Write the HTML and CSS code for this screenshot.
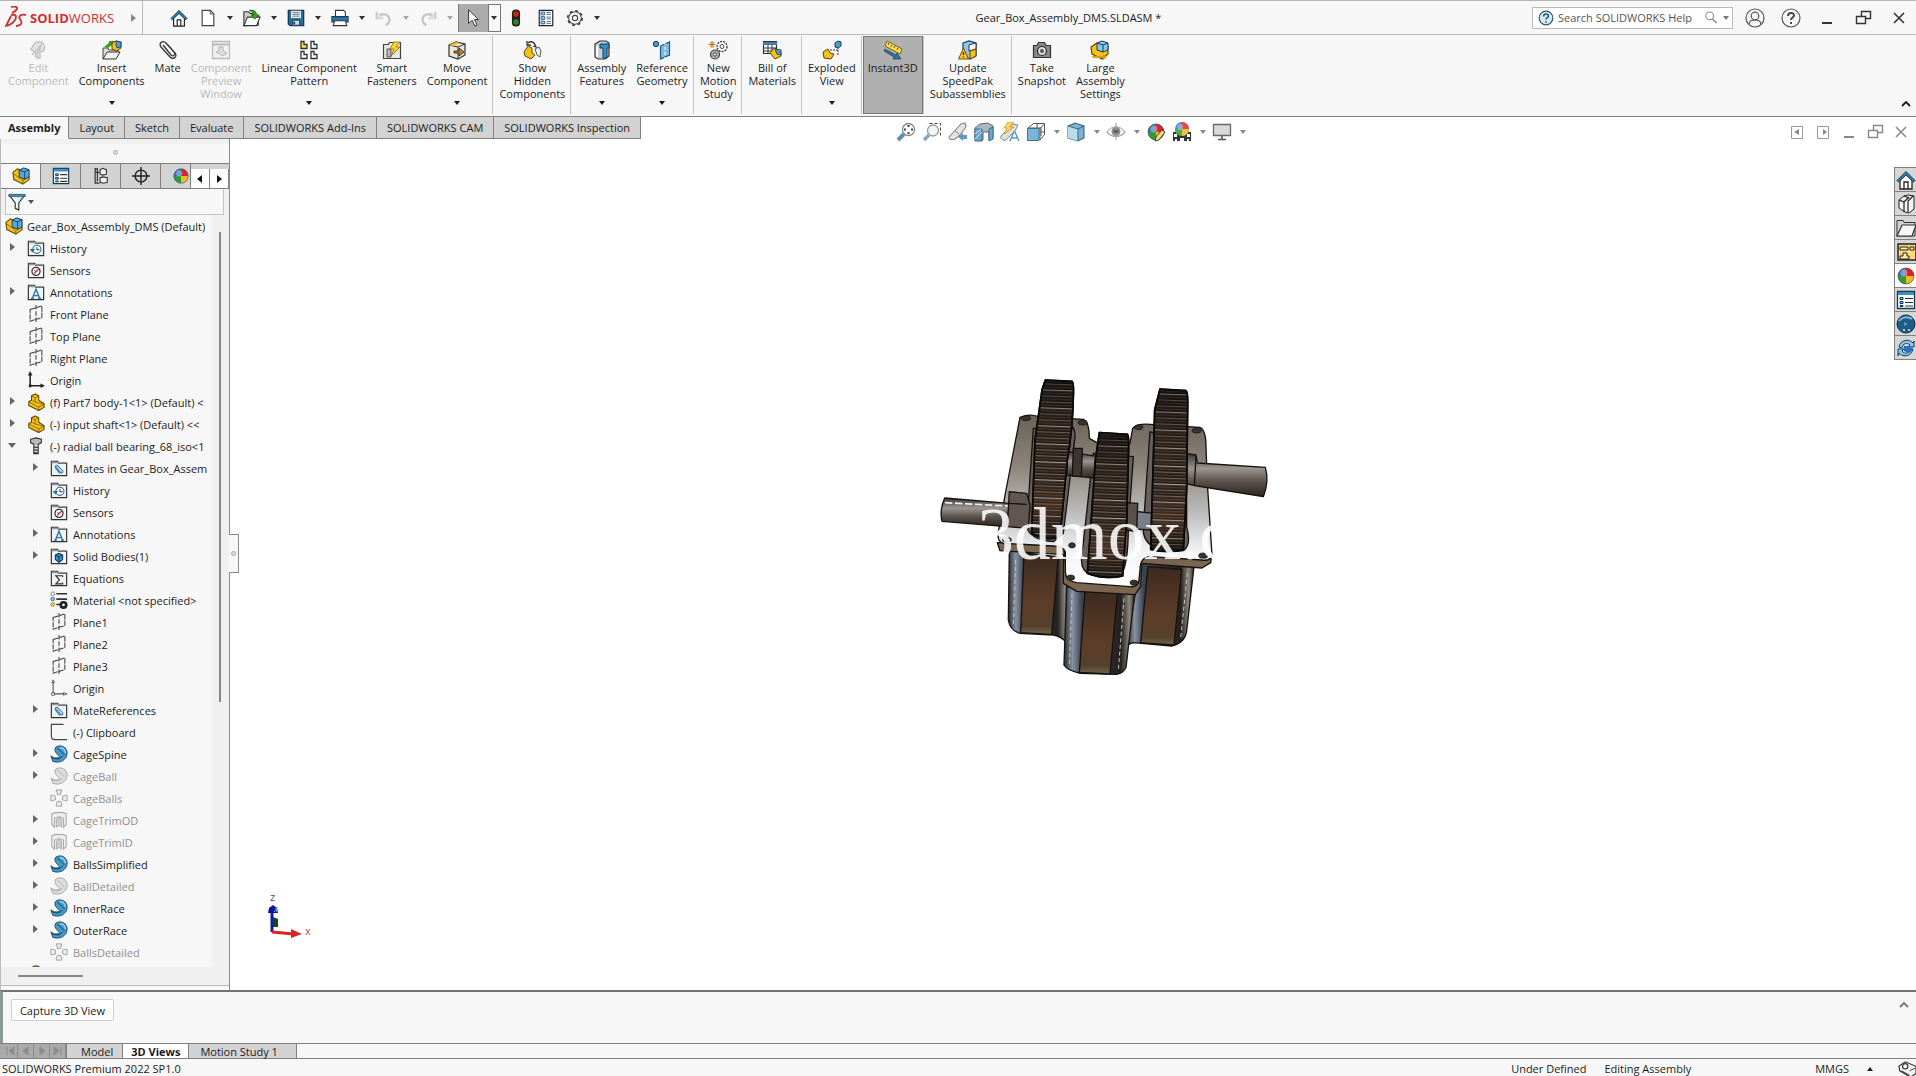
FILE: index.html
```html
<!DOCTYPE html>
<html lang="en">
<head>
<meta charset="utf-8">
<title>Gear_Box_Assembly_DMS.SLDASM</title>
<link rel="stylesheet" href="styles.css">
</head>
<body>
<svg class="defs" aria-hidden="true">
  <symbol id="caret" viewBox="0 0 8 8"><path d="M1 2h6L4 6z" fill="currentColor"/></symbol>
  <symbol id="right" viewBox="0 0 8 8"><path d="M2 0l5 4-5 4z" fill="currentColor"/></symbol>
  <symbol id="home" viewBox="0 0 20 20"><path d="M4 10v9h12v-9L10 4z" fill="#fff" stroke="#222" stroke-width="1.3"/><path d="M8 19v-7h4v7" fill="none" stroke="#222" stroke-width="1.3"/><path d="M1 10.500L10 1.500l9 9-1.500 1.500L10 5 2.500 12z" fill="#3c7da6" stroke="#123a55"/></symbol>
  <symbol id="new" viewBox="0 0 20 20"><path d="M3.500 1.500h9l4 4v13h-13z" fill="#fff" stroke="#444" stroke-width="1.300"/><path d="M12.500 1.500v4h4" fill="none" stroke="#444"/></symbol>
  <symbol id="open" viewBox="0 0 20 20"><path d="M1 18.500V3h5l2 2h3v3h6v10z" fill="#cfcfca" stroke="#333" stroke-width="1.200"/><path d="M1 18.500L5 9h14l-4 9.500z" fill="#fff" stroke="#333" stroke-width="1.200"/><path d="M7 1.500c5-1 8 1 8 5h3l-5 5-4-5h3c0-2-2-3-5-5z" fill="#3c9a1c" stroke="#1b5c0c" stroke-width=".7"/></symbol>
  <symbol id="save" viewBox="0 0 20 20"><path d="M1.500 1.500h17v17h-15l-2-2z" fill="#2f6d96" stroke="#153c58" stroke-width="1.500"/><path d="M4.500 2h11v8h-11z" fill="#eef4f8"/><path d="M6 4h8M6 6h8M6 8h8" stroke="#56758a"/><path d="M6 12.500h8V18H6z" fill="#cfdce4" stroke="#153c58"/><path d="M8 14v3" stroke="#153c58" stroke-width="2"/></symbol>
  <symbol id="print" viewBox="0 0 20 20"><path d="M5 9V1.500h9l2 2V9" fill="#fff" stroke="#333" stroke-width="1.200"/><path d="M1 8.500h18v6H1z" fill="#2f76a6" stroke="#153c58" stroke-width="1.200"/><path d="M4 13h12l1.500 5.500h-15z" fill="#fff" stroke="#333" stroke-width="1.200"/></symbol>
  <symbol id="undo" viewBox="0 0 20 20"><path d="M2 3v7h7M3 9c4-5 13-4 13 3 0 3-2 5-4 6" fill="none" stroke="#c6c6c6" stroke-width="2.500"/><path d="M2 3l8 8H2z" fill="#ddd"/></symbol>
  <symbol id="redo" viewBox="0 0 20 20"><path d="M18 3v7h-7M17 9C13 4 4 5 4 12c0 3 2 5 4 6" fill="none" stroke="#c6c6c6" stroke-width="2.500"/><path d="M18 3l-8 8h8z" fill="#ddd"/></symbol>
  <symbol id="cursor" viewBox="0 0 20 20"><path d="M4 1v15l4-3.500L11 19l2.500-1.200-3-6H15z" fill="#fff" stroke="#222"/></symbol>
  <symbol id="traffic" viewBox="0 0 20 20"><rect x="5.500" y=".5" width="9" height="19" rx="4" fill="#2b2118"/><circle cx="10" cy="5.500" r="3" fill="#c42a1c"/><circle cx="10" cy="14.500" r="3" fill="#288a2c"/></symbol>
  <symbol id="options" viewBox="0 0 20 20"><path d="M2.500 1.500h15v17h-15z" fill="#fff" stroke="#223" stroke-width="1.300"/><path d="M4.500 3.500h4v3h-4zm0 5h4v3h-4zm0 5h4v3h-4z" fill="#a9cce2" stroke="#1e5a86"/><path d="M10.500 4h5M10.500 6h5M10.500 9h5M10.500 11h5M10.500 14h5M10.500 16h5" stroke="#567"/></symbol>
  <symbol id="gear" viewBox="0 0 20 20"><circle cx="10" cy="10" r="8" fill="none" stroke="#444" stroke-width="2" stroke-dasharray="3.100 3.180"/><circle cx="10" cy="10" r="7" fill="#fff" stroke="#444" stroke-width="1.200"/><circle cx="10" cy="10" r="3" fill="none" stroke="#444" stroke-width="1.300"/></symbol>
  <symbol id="part" viewBox="0 0 20 20"><path d="M5 3l4-2 4 2v5l6 4v4l-6 3.500L2 14V9.500l3-1.500z" fill="#f5c21c" stroke="#5e4703" stroke-width="1.200" stroke-linejoin="round"/><path d="M5 3l4 2.500L13 3M9 5.500V10l-3-1.500M9 10l4 1 6 2M2 10l11 5.500v4M13 15.500l6-3" fill="none" stroke="#7d5f08" stroke-width=".9"/></symbol>
  <symbol id="assy" viewBox="0 0 20 20"><path d="M1 6l5-4 4 2v6l9 1v3l-7 5L2 14z" fill="#f5c21c" stroke="#5e4703" stroke-width="1.200" stroke-linejoin="round"/><path d="M1 7l11 8v4M12 15l7-4" fill="none" stroke="#7d5f08"/><path d="M8 3.500L13 1l6 2v8l-5 2.500-6-2.500z" fill="#59a9d8" stroke="#173f5c" stroke-width="1.100" stroke-linejoin="round"/><path d="M8 3.500l6 2 5-2.500M14 5.500V13" fill="none" stroke="#173f5c"/></symbol>
  <symbol id="partgray" viewBox="0 0 20 20"><path d="M6 4c2-3 9-3 10 1 2 3 0 7-4 7v6H9l-1-5-5-4z" fill="#e2e2e2" stroke="#bdbdbd" stroke-width="1.300"/><path d="M4 15L14 4M7 17l6-10" stroke="#c4c4c4" stroke-width="1.500"/></symbol>
  <symbol id="insert" viewBox="0 0 20 20"><path d="M1 19V8h5l1 2h9v2" fill="#ddd" stroke="#444"/><path d="M1 19l4-7h13l-4 7z" fill="#f3f3ee" stroke="#333"/><path d="M2 7l5-4V1h5v5h-2V5L6 8z" fill="#3c9a1c"/><path d="M10 3l4-2 5 1v6l-4 3-5-2z" fill="#f5c21c" stroke="#5e4703"/><path d="M14 1l5 1v5l-4 1-1-3z" fill="#4f9ccb" stroke="#173f5c" stroke-width=".8"/></symbol>
  <symbol id="clip" viewBox="0 0 20 20"><path d="M5 5l8 10c2 2 5 0 3-3L8 3C5 0 0 3 3 7l9 10c3 3 8 0 5-4L10 5" fill="none" stroke="#333" stroke-width="1.300"/></symbol>
  <symbol id="preview" viewBox="0 0 20 20"><path d="M1.500 1.500h17v17h-17z" fill="#f0f0f0" stroke="#bbb" stroke-width="1.300"/><path d="M2 4.500h16" stroke="#bbb" stroke-width="2"/><path d="M5 12l3-1V7h4v4l4 2-4 3z" fill="#ddd" stroke="#b5b5b5"/></symbol>
  <symbol id="pattern" viewBox="0 0 20 20"><g fill="#fff" stroke="#333" stroke-width="1.300"><path d="M2 1.500h3v3h3v4H2z" fill="#f8dd62"/><path d="M12 1.500h3v3h3v4h-6zM2 11.500h3v3h3v4H2zM12 11.500h3v3h3v4h-6z"/></g></symbol>
  <symbol id="smart" viewBox="0 0 20 20"><path d="M1.500 4.500h5l1-2h11v16h-17z" fill="#e8e8e2" stroke="#444" stroke-width="1.200"/><path d="M5 9h4v8H5z" fill="#bbb" stroke="#555"/><path d="M12 2h6l-4 5h4l-9 9 3-7H8z" fill="#ffd22e" stroke="#946a04" stroke-width=".8"/></symbol>
  <symbol id="move" viewBox="0 0 20 20"><path d="M2 5l7-3 9 2v11l-7 4-9-3z" fill="#ece7d6" stroke="#333" stroke-width="1.200"/><path d="M2 5l9 2 7-3M11 7v12" fill="none" stroke="#333"/><path d="M2 5l7-3 4 1-7 3z" fill="#f5c21c"/><path d="M7 11h5V8l5 4-5 4v-3H7z" fill="#c87b20" stroke="#222" stroke-width=".8"/></symbol>
  <symbol id="show" viewBox="0 0 20 20"><path d="M2 12l4-6 4 2v5l3 2-4 4-6-3z" fill="#f5c21c" stroke="#5e4703"/><path d="M13 9l4-2 2 4-1 6-3-2z" fill="#eee" stroke="#555"/><path d="M6 3c4-3 7 0 8 4l-3-1M5 1v4h4" fill="none" stroke="#333" stroke-width="1.300"/></symbol>
  <symbol id="feat" viewBox="0 0 20 20"><path d="M3 4l5-3h6l3 2v13l-4 3H6l-3-2z" fill="#c4d0d6" stroke="#333" stroke-width="1.200"/><path d="M8 4h9v4h-2v10h-4V8H8z" fill="#3b8fc6" stroke="#173f5c"/><path d="M5 6v11" stroke="#fff" stroke-width="2"/></symbol>
  <symbol id="refgeo" viewBox="0 0 20 20"><circle cx="4" cy="4" r="2.700" fill="#4b9aca" stroke="#173f5c"/><path d="M8.500 6l9-4v13l-9 4z" fill="#7dbde2" stroke="#1e5a86" stroke-width="1.200"/><path d="M13 2v17" stroke="#fff" stroke-dasharray="3 2"/></symbol>
  <symbol id="motion" viewBox="0 0 20 20"><circle cx="14" cy="6.500" r="5" fill="#fff" stroke="#444" stroke-width="1.400" stroke-dasharray="2 1"/><circle cx="14" cy="6.500" r="2" fill="none" stroke="#444"/><circle cx="7" cy="14.500" r="4.500" fill="#aaa" stroke="#444" stroke-width="1.200"/><circle cx="7" cy="14.500" r="1.600" fill="#fff" stroke="#444"/><path d="M4 1v7M.5 4.500h7M2 2l4 5M6 2L2 7" stroke="#c97320"/></symbol>
  <symbol id="bom" viewBox="0 0 20 20"><path d="M1.500 1.500h13v12h-13z" fill="#fff" stroke="#333" stroke-width="1.200"/><path d="M1 2h14v3H1z" fill="#3b7faa"/><path d="M2 8h12M2 11h12M6 5v8M10 5v8" stroke="#333"/><path d="M8 13l4-5 7 3v5l-6 3z" fill="#f5c21c" stroke="#5e4703"/><path d="M13 9l6 1v5l-4-1z" fill="#4f9ccb" stroke="#173f5c" stroke-width=".8"/></symbol>
  <symbol id="explode" viewBox="0 0 20 20"><path d="M1 12l5-3 2 4 4 1-3 5-7-1z" fill="#f5c21c" stroke="#5e4703"/><path d="M13 3l3-2 3 1v4l-3 2-3-1z" fill="#4f9ccb" stroke="#173f5c"/><path d="M8 10h8V8M16 10v5" fill="none" stroke="#333" stroke-dasharray="2 1"/></symbol>
  <symbol id="instant" viewBox="0 0 20 20"><path d="M4 1l15 8-2 5L2 6z" fill="#ffe04a" stroke="#7b6507"/><path d="M6 3L5 5M9 5L8 7M12 6l-1 2M15 8l-1 2" stroke="#444"/><path d="M2 9l11 6 1-2 4 6h-8l1-2L1 11z" fill="#3c6f96" stroke="#1d415c" stroke-width=".7"/></symbol>
  <symbol id="update" viewBox="0 0 20 20"><path d="M5 3l6-2 7 2v13l-6 3-7-3z" fill="#8cc7e8" stroke="#173f5c" stroke-width="1.200"/><path d="M11 5l7-2v6l-7 2z" fill="#fff" stroke="#333"/><path d="M12 11l6-2v7l-6 3z" fill="#f5c21c" stroke="#5e4703"/><path d="M5.500 8l5 11H.5z" fill="#ffc52c" stroke="#7b4f00"/><path d="M5.500 12v3M5.500 16.500v1" stroke="#222" stroke-width="1.300"/></symbol>
  <symbol id="camera" viewBox="0 0 20 20"><path d="M1.500 5.500H5l1.500-3h6l1.500 3h4.500v12h-17z" fill="#8a8a86" stroke="#333" stroke-width="1.200"/><circle cx="10" cy="11" r="4.500" fill="#ddd" stroke="#222" stroke-width="1.200"/><circle cx="10" cy="11" r="2" fill="#555"/></symbol>
  <symbol id="large" viewBox="0 0 20 20"><path d="M1 7l6-4 11 3v8l-6 5L2 14z" fill="#f5c21c" stroke="#5e4703" stroke-width="1.200"/><path d="M7 3l5-2 6 2v7l-5 2-6-2z" fill="#8cc7e8" stroke="#173f5c"/><path d="M7 3l6 2 5-2M13 5v7" fill="none" stroke="#173f5c"/><path d="M2 16h11v-2l4 3-4 3v-2H3z" fill="#e09a18"/></symbol>
  <symbol id="zoomfit" viewBox="0 0 20 20"><path d="M2 18l6-6" stroke="#5b93b6" stroke-width="4"/><circle cx="12.500" cy="7.500" r="6" fill="#fff" stroke="#888" stroke-width="1.300"/><path d="M12.500 3v2M12.500 10v2M8 7.500h2M15 7.500h2" stroke="#444" stroke-width="2"/></symbol>
  <symbol id="zoomarea" viewBox="0 0 20 20"><path d="M7.500 1.500h11v12" fill="none" stroke="#444" stroke-dasharray="3 2"/><path d="M2 18l5-5" stroke="#7fa9c4" stroke-width="3.500"/><circle cx="11" cy="8.500" r="5.500" fill="#f2f4f5" stroke="#999" stroke-width="1.300"/></symbol>
  <symbol id="prev" viewBox="0 0 20 20"><path d="M1 15L13 2l4-1 1 4-6 8-5 4c-3 1-6 1-6-2z" fill="#e4e4e2" stroke="#888" stroke-width="1.100"/><path d="M7 9l4 3" stroke="#888"/><path d="M10 15l5-4v2h4v4h-4v2z" fill="#5b9cc4"/></symbol>
  <symbol id="section" viewBox="0 0 20 20"><path d="M1 6l5-4 8-1 5 3v12l-4 2v-8H9v8H1z" fill="#a9b9c2" stroke="#666"/><path d="M1 7h7v12H1zM15 7l4-2v12l-4 2z" fill="#66a9cd" stroke="#3d6a86"/><path d="M1 12l6-5M1 17l7-7" stroke="#d4eaf6"/></symbol>
  <symbol id="dynamic" viewBox="0 0 20 20"><path d="M1 14L13 2l5 1-3 6-9 9c-3 1-6-1-5-4z" fill="#e0dfdb" stroke="#888"/><path d="M8 0h6l-4 5h4L4 12l3-6H4z" fill="#ffd65c" stroke="#b78a25" stroke-width=".7"/><path d="M10 19l4-9h1l4 9M12 16h5" fill="none" stroke="#5b9cc4" stroke-width="1.500"/></symbol>
  <symbol id="orient" viewBox="0 0 20 20"><path d="M7 1.500h11.500v11L14 18V6.500L18.500 2M7 2L2 6" fill="#fff" stroke="#555"/><path d="M11 2v4M15 5v9M2 6h12M15 10h4" stroke="#555"/><path d="M1.500 6.500H13v12H1.500z" fill="#79b5d6" stroke="#3a7090"/></symbol>
  <symbol id="cube" viewBox="0 0 20 20"><path d="M2 4l7-3 9 3v12l-6 3-10-3z" fill="#7ab4d3" stroke="#41647a" stroke-width="1.100"/><path d="M2 4l10 3v12L2 16z" fill="#b9dcee"/><path d="M2 4l10 3 6-3M12 7v12" fill="none" stroke="#41647a"/></symbol>
  <symbol id="eye" viewBox="0 0 20 20"><path d="M1 10c5-7 13-7 18 0-5 6-13 6-18 0z" fill="#fff" stroke="#aaa" stroke-width="1.200"/><circle cx="10" cy="9.500" r="4.500" fill="#8a8a8a"/><circle cx="10" cy="9.500" r="1.800" fill="#333"/><path d="M10 1v17" stroke="#999"/></symbol>
  <symbol id="ball" viewBox="0 0 20 20"><path d="M10 10V2a8 8 0 0 1 8 8z" fill="#d8232a"/><path d="M10 10h8a8 8 0 0 1-8 8z" fill="#efbd1f"/><path d="M10 10v8a8 8 0 0 1-8-8z" fill="#319b35"/><path d="M10 10H2a8 8 0 0 1 8-8z" fill="#2d73be"/><circle cx="8" cy="7" r="3.500" fill="#fff" opacity=".35"/><circle cx="10" cy="10" r="8" fill="none" stroke="#444" stroke-width=".7"/></symbol>
  <symbol id="ballpen" viewBox="0 0 20 20"><use href="#ball"/><path d="M9 19l1-4 6-7 3 2-6 8z" fill="#f2dc7a" stroke="#444"/></symbol>
  <symbol id="scene" viewBox="0 0 20 20"><path d="M1 10h18v9H1z" fill="#333"/><path d="M2 12h3v3H2zM8 16h4v3H8zM15 12h3v3h-3zM3 17h2v2H3zM15 17h2v2h-2z" fill="#fff"/><circle cx="10" cy="7" r="7" fill="#4a86c8"/><path d="M10 7V0a7 7 0 0 1 7 7z" fill="#dc4a4a"/><path d="M10 7h7a7 7 0 0 1-7 7z" fill="#efc440"/><path d="M10 7v7a7 7 0 0 1-7-7z" fill="#4fae52"/><circle cx="8" cy="5" r="3" fill="#fff" opacity=".35"/></symbol>
  <symbol id="monitor" viewBox="0 0 20 20"><path d="M1.500 2.500h17v11h-17z" fill="#d9dadb" stroke="#666" stroke-width="1.300"/><path d="M10 14v3M6 17.500h8" stroke="#555" stroke-width="1.600"/></symbol>
  <symbol id="helpblue" viewBox="0 0 20 20"><circle cx="10" cy="10" r="8.500" fill="#d7ebf5" stroke="#3b5160" stroke-width="1.500"/><path d="M7 8c0-4 6-4 6-.5 0 2-3 2.200-3 4.500M10 14v2" fill="none" stroke="#1c5c86" stroke-width="2"/></symbol>
  <symbol id="help" viewBox="0 0 20 20"><circle cx="10" cy="10" r="9" fill="none" stroke="#555" stroke-width="1.200"/><path d="M7 8c0-4 6-4 6-.5 0 2-3 2.200-3 4.500M10 14v2" fill="none" stroke="#444" stroke-width="1.900"/></symbol>
  <symbol id="user" viewBox="0 0 20 20"><circle cx="10" cy="10" r="9" fill="none" stroke="#555" stroke-width="1.200"/><circle cx="10" cy="8" r="3.800" fill="none" stroke="#555" stroke-width="1.200"/><path d="M4 16c1-4 3-4 6-4s5 0 6 4" fill="none" stroke="#555" stroke-width="1.200"/></symbol>
  <symbol id="mag" viewBox="0 0 20 20"><circle cx="8" cy="7" r="5.500" fill="none" stroke="#888" stroke-width="1.500"/><path d="M12 11l6 6" stroke="#888" stroke-width="2"/></symbol>
  <symbol id="min" viewBox="0 0 20 20"><path d="M5 15h10" stroke="currentColor" stroke-width="2"/></symbol>
  <symbol id="restore" viewBox="0 0 20 20"><path d="M3.500 8.500h9v7h-9zM8.500 8V3.500h9v7H13" fill="none" stroke="currentColor" stroke-width="1.400"/></symbol>
  <symbol id="close" viewBox="0 0 20 20"><path d="M5 5l10 10M15 5L5 15" stroke="currentColor" stroke-width="1.600"/></symbol>
  <symbol id="paneL" viewBox="0 0 20 20"><path d="M4.500 4.500h11v12h-11z" fill="none" stroke="#999"/><path d="M12 7v6l-5-3z" fill="#888"/></symbol>
  <symbol id="paneR" viewBox="0 0 20 20"><path d="M4.500 4.500h11v12h-11z" fill="none" stroke="#999"/><path d="M10 7v6l4-3z" fill="#888"/></symbol>
  <symbol id="chev" viewBox="0 0 12 12"><path d="M2 8l4-4 4 4" fill="none" stroke="currentColor" stroke-width="1.800"/></symbol>
  <symbol id="books" viewBox="0 0 20 20"><path d="M3 6l5-4 4-1 6 1v13l-5 4-4-1-6-4z" fill="#f4f4f4" stroke="#222"/><path d="M3 6l5 2v10M8 8l5-5M12 18V7l5-5M8 2l5 2" fill="none" stroke="#222" stroke-width="1.200"/></symbol>
  <symbol id="folder" viewBox="0 0 20 20"><path d="M1 18V2.500h6l1 2h11V18z" fill="#d2d2d2" stroke="#333"/><path d="M1 18L6 7h14l-4 11z" fill="#f5f5f5" stroke="#333" stroke-width="1.200"/></symbol>
  <symbol id="palette" viewBox="0 0 20 20"><path d="M2 2h18v16H2z" fill="#ffd67a" stroke="#222" stroke-width="1.500"/><path d="M4 5h8v3H4zM14 5h4v3h-4zM7 11h4v3h2v3H4v-3h3z" fill="#ffeaa5" stroke="#222"/></symbol>
  <symbol id="props" viewBox="0 0 20 20"><path d="M1.500 1.500h17v17h-17z" fill="#fff" stroke="#123a55" stroke-width="1.300"/><path d="M2 2h16v3H2z" fill="#3b8fc6"/><path d="M4 7.500h3v2H4zm0 4h3v2H4zm0 4h3v1H4z" fill="#8cc7e8" stroke="#123a55"/><path d="M9 8.500h8M9 12.500h8M9 16h8" stroke="#333" stroke-width="1.200"/></symbol>
  <symbol id="forum" viewBox="0 0 20 20"><circle cx="10" cy="10" r="9" fill="#1f5c86" stroke="#0b2f4a"/><path d="M3 7c3-4 9-5 13-2" fill="none" stroke="#7eb8da" stroke-width="2"/><path d="M8 8l4 2-4 2z" fill="#5f9cc0"/><path d="M7 16h2M12 16h2" stroke="#cfe7f4" stroke-width="1.300"/></symbol>
  <symbol id="sync" viewBox="0 0 20 20"><path d="M3 9c1-7 10-9 14-4l1-2v6h-6l2-2c-3-3-7-2-8 3zM17 11c-1 7-10 9-14 4l-1 3v-7h6l-2 2c3 4 7 2 8-2z" fill="#8cc7e8" stroke="#173f5c"/><path d="M8 8h6l3 4-4 3-5-2z" fill="#2c6fbe"/></symbol>
  <symbol id="config" viewBox="0 0 20 20"><path d="M3.500 1v17h5M3.500 6h5M3 2h3v14" fill="none" stroke="#333" stroke-width="1.300"/><path d="M9 3l3-1.500L16 3v5l-4 1-3-1zM9 12l3-1 5 1v5l-4 1-4-1z" fill="#eee" stroke="#333" stroke-width="1.200"/></symbol>
  <symbol id="target" viewBox="0 0 20 20"><circle cx="10" cy="10" r="6.500" fill="none" stroke="#222" stroke-width="1.600"/><path d="M10 0v20M0 10h20" stroke="#222" stroke-width="1.600"/></symbol>
  <symbol id="filter" viewBox="0 0 20 20"><path d="M1.500 2.500h17L12 11v8l-4-2v-6z" fill="#eef5f9" stroke="#333" stroke-width="1.300"/><path d="M1 1.500h18v2.500H1z" fill="#3b8fc6" stroke="#173f5c" stroke-width=".7"/></symbol>
  <symbol id="fold" viewBox="0 0 20 20"><path d="M1.500 18.500v-16h7l1 2h9v14z" fill="#f0f2f3" stroke="#333" stroke-width="1.300"/><path d="M2 4h16" stroke="#999" stroke-width="1.500"/></symbol>
  <symbol id="history" viewBox="0 0 20 20"><use href="#fold"/><circle cx="11" cy="11.500" r="4.500" fill="#fff" stroke="#2a7099" stroke-width="1.200"/><path d="M11 9v3h3" fill="none" stroke="#222"/><path d="M3 11l3 4 3-4z" fill="#2a7099"/></symbol>
  <symbol id="sensor" viewBox="0 0 20 20"><use href="#fold"/><circle cx="10" cy="11.500" r="4.500" fill="#fff" stroke="#333" stroke-width="1.400"/><path d="M8 14l5-5" stroke="#c33" stroke-width="1.500"/><path d="M8 10l2 2" stroke="#333"/></symbol>
  <symbol id="annot" viewBox="0 0 20 20"><use href="#fold"/><path d="M6 17l4-10 4 10M7.500 14h5M4.500 17h3M12.500 17h3" fill="none" stroke="#2b78ae" stroke-width="1.600"/></symbol>
  <symbol id="mates" viewBox="0 0 20 20"><use href="#fold"/><path d="M7 9l5 6c1 1 3 0 2-2L9 8c-2-2-4 0-3 2l5 6" fill="none" stroke="#2b78ae" stroke-width="1.200"/></symbol>
  <symbol id="solid" viewBox="0 0 20 20"><use href="#fold"/><path d="M6 9l4-2 4 2v5l-4 3-4-3z" fill="#3b8fc6" stroke="#123a55" stroke-width="1.200"/><path d="M6 9l4 2 4-2M10 11v6" fill="none" stroke="#123a55"/></symbol>
  <symbol id="equation" viewBox="0 0 20 20"><use href="#fold"/><path d="M14 9V7.500H6.500l4 4.500-4 4.500H14V15" fill="none" stroke="#333" stroke-width="1.300"/></symbol>
  <symbol id="plane" viewBox="0 0 20 20"><path d="M3.500 5l13-4v13l-13 4z" fill="none" stroke="#444" stroke-width="1.200" stroke-dasharray="6 1"/><path d="M10 0v20" stroke="#444" stroke-dasharray="5 2" stroke-width="1.200"/></symbol>
  <symbol id="origin" viewBox="0 0 20 20"><path d="M3.500 3v13.500H17" fill="none" stroke="#222" stroke-width="1.700"/><path d="M1 5l2.500-5L6 5zM15 14l5 2.500-5 2.500zM2 15h3v3H2z" fill="#222"/></symbol>
  <symbol id="originh" viewBox="0 0 20 20"><path d="M3.500 3v13.500H17" fill="none" stroke="#555" stroke-width="1.200"/><path d="M2 4l1.500-3L5 4zM15 15l4 1.500-4 1.500zM2 15h3v3H2z" fill="#fff" stroke="#555"/></symbol>
  <symbol id="screw" viewBox="0 0 20 20"><path d="M4 2.500l6-1.500 6 1.500v4L10 9 4 6.500z" fill="#bbb" stroke="#333" stroke-width="1.200"/><path d="M7.500 8v10.500h5V8M7.500 11l5 1M7.500 14l5 1M7.500 17l5 1" fill="#ddd" stroke="#333" stroke-width="1.200"/></symbol>
  <symbol id="material" viewBox="0 0 20 20"><path d="M7 3h12M7 9h12M7 15h6" stroke="#333" stroke-width="1.800"/><circle cx="3" cy="3" r="2" fill="#fff" stroke="#777"/><circle cx="3" cy="9" r="2" fill="#8cc7e8" stroke="#2a6a96"/><circle cx="3" cy="15" r="2" fill="#ffd25c" stroke="#a67a0d"/><circle cx="15" cy="15.500" r="3" fill="none" stroke="#222" stroke-width="3"/></symbol>
  <symbol id="clipb" viewBox="0 0 20 20"><path d="M15 1.500H1.500v13c0 3 1 4 4 4H19" fill="none" stroke="#445" stroke-width="1.300"/></symbol>
  <symbol id="sweep" viewBox="0 0 20 20"><path d="M7 2c6-3 12 1 12 7 0 8-9 12-16 9l-2-6c3 3 8 3 10 1L7 9C5 7 5 3 7 2z" fill="currentColor" stroke="#234b63" stroke-width="1.100"/><path d="M8 3l8 8M2 14c6 3 10 1 12-2" fill="none" stroke="#173f5c" stroke-width="1.100"/><path d="M11 3c4 0 6 3 6 6" fill="none" stroke="#a4d4ec" stroke-width="1.500"/></symbol>
  <symbol id="sweepoff" viewBox="0 0 20 20"><path d="M7 2c6-3 12 1 12 7 0 8-9 12-16 9l-2-6c3 3 8 3 10 1L7 9C5 7 5 3 7 2z" fill="#ddd" stroke="#a8a8a8" stroke-width="1.100"/><path d="M8 3l8 8M2 14c6 3 10 1 12-2" fill="none" stroke="#aaa"/></symbol>
  <symbol id="circ" viewBox="0 0 20 20"><path d="M7 1h6v2h-1v3H8V3H7zM1 7h2l3 1v4l-3 1H1zM19 7h-2l-3 1v4l3 1h2zM7 19v-2l1-3h4l1 3v2z" fill="#eee" stroke="#999"/></symbol>
  <symbol id="trim" viewBox="0 0 20 20"><path d="M2 3c4-2 12-2 16 0v12l-3 3V8c-3-2-7-2-10 0v10l-3-3z" fill="#eee" stroke="#aaa" stroke-width="1.200"/><path d="M7 18V9l3-2 3 2v9l-3-2z" fill="#ccc" stroke="#aaa"/></symbol>
  <symbol id="tag" viewBox="0 0 20 20"><path d="M1 7l7-5 12 5v8l-6 4L2 12z" fill="#f4f4f4" stroke="#333" stroke-width="1.300"/><circle cx="8" cy="7" r="3" fill="none" stroke="#333" stroke-width="1.300"/><path d="M4 12l9 5M13 12l6-3" stroke="#333"/></symbol>
</svg>

<header class="titlebar">
  <div class="brand">
    <svg class="logo" viewBox="0 0 22 24" aria-hidden="true"><path d="M6 1c4-1 7 0 6 2s-3 3-5 4M6 9c5-1 6 1 4 5-2 3-5 5-9 6l5-10M21 9c-5-1-8 1-6 4s3 6-4 7" fill="none" stroke="#cf2f2f" stroke-width="1.800"/></svg>
    <span class="wordmark"><b>SOLID</b>WORKS</span>
    <svg class="i8 brand-arrow"><use href="#right"/></svg>
  </div>
  <nav class="quick" aria-label="Quick access">
    <button aria-label="Home"><svg class="i18"><use href="#home"/></svg></button>
    <button class="drop" aria-label="New"><svg class="i18"><use href="#new"/></svg><svg class="i8"><use href="#caret"/></svg></button>
    <button class="drop" aria-label="Open"><svg class="i18"><use href="#open"/></svg><svg class="i8"><use href="#caret"/></svg></button>
    <button class="drop" aria-label="Save"><svg class="i18"><use href="#save"/></svg><svg class="i8"><use href="#caret"/></svg></button>
    <button class="drop" aria-label="Print"><svg class="i18"><use href="#print"/></svg><svg class="i8"><use href="#caret"/></svg></button>
    <button class="drop off" aria-label="Undo"><svg class="i18"><use href="#undo"/></svg><svg class="i8"><use href="#caret"/></svg></button>
    <button class="drop off" aria-label="Redo"><svg class="i18"><use href="#redo"/></svg><svg class="i8"><use href="#caret"/></svg></button>
    <button class="select" aria-label="Select"><span><svg class="i18"><use href="#cursor"/></svg></span><svg class="i8"><use href="#caret"/></svg></button>
    <button aria-label="Rebuild"><svg class="i18"><use href="#traffic"/></svg></button>
    <button aria-label="File properties"><svg class="i18"><use href="#options"/></svg></button>
    <button class="drop" aria-label="Options"><svg class="i18"><use href="#gear"/></svg><svg class="i8"><use href="#caret"/></svg></button>
  </nav>
  <h1 class="doc-title">Gear_Box_Assembly_DMS.SLDASM *</h1>
  <label class="search"><svg class="i16"><use href="#helpblue"/></svg><input type="text" placeholder="Search SOLIDWORKS Help" aria-label="Search SOLIDWORKS Help"><svg class="i14"><use href="#mag"/></svg><svg class="i8"><use href="#caret"/></svg></label>
  <div class="window">
    <button aria-label="Account"><svg class="i20"><use href="#user"/></svg></button>
    <button aria-label="Help"><svg class="i20"><use href="#help"/></svg></button>
    <button aria-label="Minimize"><svg class="i20"><use href="#min"/></svg></button>
    <button aria-label="Restore"><svg class="i20"><use href="#restore"/></svg></button>
    <button aria-label="Close"><svg class="i20"><use href="#close"/></svg></button>
  </div>
</header>

<section class="ribbon" aria-label="Assembly commands">
  <div class="group">
    <button disabled><svg class="i20"><use href="#partgray"/></svg>Edit<br>Component</button>
    <button><svg class="i20"><use href="#insert"/></svg>Insert<br>Components<svg class="i8"><use href="#caret"/></svg></button>
    <button><svg class="i20"><use href="#clip"/></svg>Mate</button>
    <button disabled><svg class="i20"><use href="#preview"/></svg>Component<br>Preview<br>Window</button>
    <button><svg class="i20"><use href="#pattern"/></svg>Linear Component<br>Pattern<svg class="i8"><use href="#caret"/></svg></button>
    <button><svg class="i20"><use href="#smart"/></svg>Smart<br>Fasteners</button>
    <button><svg class="i20"><use href="#move"/></svg>Move<br>Component<svg class="i8"><use href="#caret"/></svg></button>
  </div>
  <div class="group"><button><svg class="i20"><use href="#show"/></svg>Show<br>Hidden<br>Components</button></div>
  <div class="group">
    <button><svg class="i20"><use href="#feat"/></svg>Assembly<br>Features<svg class="i8"><use href="#caret"/></svg></button>
    <button><svg class="i20"><use href="#refgeo"/></svg>Reference<br>Geometry<svg class="i8"><use href="#caret"/></svg></button>
  </div>
  <div class="group"><button><svg class="i20"><use href="#motion"/></svg>New<br>Motion<br>Study</button></div>
  <div class="group"><button><svg class="i20"><use href="#bom"/></svg>Bill of<br>Materials</button></div>
  <div class="group"><button><svg class="i20"><use href="#explode"/></svg>Exploded<br>View<svg class="i8"><use href="#caret"/></svg></button></div>
  <div class="group"><button class="pressed" aria-pressed="true"><svg class="i20"><use href="#instant"/></svg>Instant3D</button></div>
  <div class="group"><button><svg class="i20"><use href="#update"/></svg>Update<br>SpeedPak<br>Subassemblies</button></div>
  <div class="group last">
    <button><svg class="i20"><use href="#camera"/></svg>Take<br>Snapshot</button>
    <button><svg class="i20"><use href="#large"/></svg>Large<br>Assembly<br>Settings</button>
  </div>
  <button class="collapse" aria-label="Collapse ribbon"><svg class="i12"><use href="#chev"/></svg></button>
</section>

<div class="commandrow">
  <nav class="cmdtabs" aria-label="Command tabs">
    <button class="active">Assembly</button><button>Layout</button><button>Sketch</button><button>Evaluate</button><button>SOLIDWORKS Add-Ins</button><button>SOLIDWORKS CAM</button><button>SOLIDWORKS Inspection</button>
  </nav>
  <div class="hud" role="toolbar" aria-label="View">
    <button aria-label="Zoom to fit"><svg class="i20"><use href="#zoomfit"/></svg></button>
    <button aria-label="Zoom to area"><svg class="i20"><use href="#zoomarea"/></svg></button>
    <button aria-label="Previous view"><svg class="i20"><use href="#prev"/></svg></button>
    <button aria-label="Section view"><svg class="i20"><use href="#section"/></svg></button>
    <button aria-label="Dynamic annotation"><svg class="i20"><use href="#dynamic"/></svg></button>
    <button class="wide" aria-label="View orientation"><svg class="i20"><use href="#orient"/></svg><svg class="i8"><use href="#caret"/></svg></button>
    <button class="wide" aria-label="Display style"><svg class="i20"><use href="#cube"/></svg><svg class="i8"><use href="#caret"/></svg></button>
    <button class="wide" aria-label="Hide or show"><svg class="i20"><use href="#eye"/></svg><svg class="i8"><use href="#caret"/></svg></button>
    <button aria-label="Edit appearance"><svg class="i20"><use href="#ballpen"/></svg></button>
    <button class="wide" aria-label="Apply scene"><svg class="i20"><use href="#scene"/></svg><svg class="i8"><use href="#caret"/></svg></button>
    <button class="wide" aria-label="View settings"><svg class="i20"><use href="#monitor"/></svg><svg class="i8"><use href="#caret"/></svg></button>
  </div>
  <div class="docwin">
    <button aria-label="Dock left"><svg class="i20"><use href="#paneL"/></svg></button>
    <button aria-label="Dock right"><svg class="i20"><use href="#paneR"/></svg></button>
    <button aria-label="Minimize document"><svg class="i20"><use href="#min"/></svg></button>
    <button aria-label="Restore document"><svg class="i20"><use href="#restore"/></svg></button>
    <button aria-label="Close document"><svg class="i20"><use href="#close"/></svg></button>
  </div>
</div>

<main class="work">
  <aside class="manager">
    <div class="grip"><i></i></div>
    <div class="mtabs">
      <button class="active" aria-label="Feature tree"><svg class="i18"><use href="#assy"/></svg></button>
      <button aria-label="Properties"><svg class="i18"><use href="#props"/></svg></button>
      <button aria-label="Configurations"><svg class="i18"><use href="#config"/></svg></button>
      <button aria-label="Dimensions"><svg class="i18"><use href="#target"/></svg></button>
      <button class="cut" aria-label="Display"><svg class="i18"><use href="#ball"/></svg></button>
      <button class="scroll" aria-label="Scroll left"><svg class="i8 flip"><use href="#right"/></svg></button>
      <button class="scroll" aria-label="Scroll right"><svg class="i8"><use href="#right"/></svg></button>
    </div>
    <button class="filter" aria-label="Filter"><svg class="i18"><use href="#filter"/></svg><svg class="i8"><use href="#caret"/></svg></button>
    <div class="treewrap">
      <ul class="tree">
        <li class="root"><svg class="i18"><use href="#assy"/></svg>Gear_Box_Assembly_DMS (Default)</li>
        <li><b class="tw"></b><svg class="i18"><use href="#history"/></svg>History</li>
        <li><b></b><svg class="i18"><use href="#sensor"/></svg>Sensors</li>
        <li><b class="tw"></b><svg class="i18"><use href="#annot"/></svg>Annotations</li>
        <li><b></b><svg class="i18"><use href="#plane"/></svg>Front Plane</li>
        <li><b></b><svg class="i18"><use href="#plane"/></svg>Top Plane</li>
        <li><b></b><svg class="i18"><use href="#plane"/></svg>Right Plane</li>
        <li><b></b><svg class="i18"><use href="#origin"/></svg>Origin</li>
        <li><b class="tw"></b><svg class="i18"><use href="#part"/></svg>(f) Part7 body-1&lt;1&gt; (Default) &lt;</li>
        <li><b class="tw"></b><svg class="i18"><use href="#part"/></svg>(-) input shaft&lt;1&gt; (Default) &lt;&lt;</li>
        <li><b class="tw open"></b><svg class="i18"><use href="#screw"/></svg>(-) radial ball bearing_68_iso&lt;1</li>
        <li class="sub"><b class="tw"></b><svg class="i18"><use href="#mates"/></svg>Mates in Gear_Box_Assem</li>
        <li class="sub"><b></b><svg class="i18"><use href="#history"/></svg>History</li>
        <li class="sub"><b></b><svg class="i18"><use href="#sensor"/></svg>Sensors</li>
        <li class="sub"><b class="tw"></b><svg class="i18"><use href="#annot"/></svg>Annotations</li>
        <li class="sub"><b class="tw"></b><svg class="i18"><use href="#solid"/></svg>Solid Bodies(1)</li>
        <li class="sub"><b></b><svg class="i18"><use href="#equation"/></svg>Equations</li>
        <li class="sub"><b></b><svg class="i18"><use href="#material"/></svg>Material &lt;not specified&gt;</li>
        <li class="sub"><b></b><svg class="i18"><use href="#plane"/></svg>Plane1</li>
        <li class="sub"><b></b><svg class="i18"><use href="#plane"/></svg>Plane2</li>
        <li class="sub"><b></b><svg class="i18"><use href="#plane"/></svg>Plane3</li>
        <li class="sub"><b></b><svg class="i18"><use href="#originh"/></svg>Origin</li>
        <li class="sub"><b class="tw"></b><svg class="i18"><use href="#mates"/></svg>MateReferences</li>
        <li class="sub"><b></b><svg class="i18"><use href="#clipb"/></svg>(-) Clipboard</li>
        <li class="sub"><b class="tw"></b><svg class="i18 blue"><use href="#sweep"/></svg>CageSpine</li>
        <li class="sub dim"><b class="tw"></b><svg class="i18"><use href="#sweepoff"/></svg>CageBall</li>
        <li class="sub dim"><b></b><svg class="i18"><use href="#circ"/></svg>CageBalls</li>
        <li class="sub dim"><b class="tw"></b><svg class="i18"><use href="#trim"/></svg>CageTrimOD</li>
        <li class="sub dim"><b class="tw"></b><svg class="i18"><use href="#trim"/></svg>CageTrimID</li>
        <li class="sub"><b class="tw"></b><svg class="i18 blue"><use href="#sweep"/></svg>BallsSimplified</li>
        <li class="sub dim"><b class="tw"></b><svg class="i18"><use href="#sweepoff"/></svg>BallDetailed</li>
        <li class="sub"><b class="tw"></b><svg class="i18 blue"><use href="#sweep"/></svg>InnerRace</li>
        <li class="sub"><b class="tw"></b><svg class="i18 blue"><use href="#sweep"/></svg>OuterRace</li>
        <li class="sub dim"><b></b><svg class="i18"><use href="#circ"/></svg>BallsDetailed</li>
        <li><b></b><svg class="i18" viewBox="0 0 20 20"><circle cx="10" cy="7" r="6" fill="#d9a36a" stroke="#6b4420" stroke-width="1.500"/></svg></li>
      </ul>
      <div class="vbar"><i></i></div>
    </div>
    <div class="hbar"><i></i></div>
    <div class="foot"></div>
    <button class="splitter" aria-label="Collapse panel"><i></i></button>
  </aside>

  <section class="viewport" aria-label="Graphics area">
    <svg class="model" viewBox="0 0 1110 990" role="img" aria-label="Gear box assembly">
      <defs>
        <linearGradient id="plate" x1="0" y1="0" x2="0" y2="1"><stop offset="0" stop-color="#6a6157"/><stop offset=".3" stop-color="#8d857b"/><stop offset=".55" stop-color="#b9b8b8"/><stop offset=".8" stop-color="#f4f4f8"/><stop offset="1" stop-color="#fff"/></linearGradient>
        <linearGradient id="brown" x1="0" y1="0" x2="0" y2="1"><stop offset="0" stop-color="#3b2a1f"/><stop offset=".6" stop-color="#5c3d27"/><stop offset=".9" stop-color="#54402c"/><stop offset="1" stop-color="#6e6850"/></linearGradient>
        <linearGradient id="side" x1="0" y1="0" x2="1" y2="0"><stop offset="0" stop-color="#2b2b2d"/><stop offset=".12" stop-color="#8793a5"/><stop offset=".25" stop-color="#3c4350"/><stop offset=".8" stop-color="#23211f"/><stop offset=".92" stop-color="#8e887c"/><stop offset="1" stop-color="#2c2b29"/></linearGradient>
        <linearGradient id="shaft" x1="0" y1="0" x2="0" y2="1"><stop offset="0" stop-color="#383533"/><stop offset=".35" stop-color="#9a9591"/><stop offset=".65" stop-color="#5b514b"/><stop offset="1" stop-color="#2b2521"/></linearGradient>
        <pattern id="teeth" width="120" height="54" patternUnits="userSpaceOnUse" patternTransform="rotate(2)"><path d="M0 0h120v54H0z" fill="#12100e"/><path d="M0 5h120M0 41h120" stroke="#75695e" stroke-width="4"/><path d="M0 14h120M0 32h120M0 50h120" stroke="#3f362f" stroke-width="5"/><path d="M0 23h120" stroke="#b5ada5" stroke-width="4"/></pattern>
        <linearGradient id="shade" x1="0" y1="0" x2="0" y2="1"><stop offset="0" stop-color="#000" stop-opacity=".4"/><stop offset=".6" stop-color="#7b4d35" stop-opacity=".1"/><stop offset=".8" stop-color="#7b4d35" stop-opacity=".35"/><stop offset="1" stop-color="#000" stop-opacity=".3"/></linearGradient>
      </defs>
      <g stroke="#17120f" stroke-width="4" stroke-linejoin="round">
        <path d="M268 570L265 780Q270 812 300 820L400 825Q425 830 440 848L450 600z" fill="url(#side)"/>
        <path d="M312 580L415 590 395 823 302 818z" fill="url(#brown)"/>
        <path d="M662 605L620 855 640 848 755 858Q795 850 800 812L822 620z" fill="url(#side)"/>
        <path d="M684 620L785 628 762 855 662 848z" fill="url(#brown)"/>
        <path d="M440 680L432 915Q440 930 480 940L590 943Q610 940 618 922L645 690z" fill="url(#side)"/>
        <path d="M495 690L592 700 570 942 478 937z" fill="url(#brown)"/>
        <path d="M232 548L240 572 430 584 430 670 470 694 645 704 662 680 666 610 846 624 872 608 876 580 660 570 600 660 440 640 430 550z" fill="#7a6550"/>
        <path d="M300 172Q330 160 355 170L490 178Q508 186 508 235L535 250 630 250 638 205Q650 190 690 193L840 202Q858 210 858 260L862 370 876 585Q872 604 845 600L690 590Q660 592 660 630L656 668Q648 682 630 680L470 668Q436 662 436 635L436 575Q430 560 400 558L250 550Q230 545 235 515L258 390z" fill="url(#plate)"/>
        <path d="M340 205L320 500Q330 540 400 545L430 520 465 230Q465 200 450 195zM690 215L670 500Q665 560 740 575L790 572Q815 555 800 500L800 260zM520 280L485 590Q480 635 515 645L600 650Q625 620 625 500L640 290z" fill="#68605a"/>
        <path d="M440 275L535 290 530 355 440 345z" fill="url(#shaft)"/><path d="M460 265L487 265 484 350 457 348z" fill="#3a3532"/>
        <path d="M610 450L700 460 695 510 610 505z" fill="#788087"/><path d="M623 428L653 430 650 515 620 510z" fill="#5b5049"/>
        <path d="M74 414L268 430 260 500 66 484Q58 450 74 414z" fill="url(#shaft)"/><path d="M75 428L265 438" stroke="#eee" stroke-width="5" stroke-dasharray="22 8"/>
        <path d="M268 395L320 400 330 435 325 505 262 500z" fill="#625750"/><path d="M266 430L320 433" fill="none"/>
        <path d="M795 280L828 285 832 309 1036 322Q1048 365 1030 410L832 378 795 370z" fill="url(#shaft)"/><path d="M828 287L823 378" fill="none"/>
      </g>
      <g stroke="#0c0a08" stroke-width="5" stroke-linejoin="round">
        <path d="M376 60L456 64Q462 66 460 110 458 210 442 300L420 530Q380 545 335 520L345 240 366 90z" fill="url(#teeth)"/><path d="M376 60L456 64Q462 66 460 110 458 210 442 300L420 530Q380 545 335 520L345 240 366 90z" fill="url(#shade)"/>
        <path d="M720 87L798 92Q804 95 803 140L800 380 790 570Q740 580 692 568L700 300 704 150z" fill="url(#teeth)"/><path d="M720 87L798 92Q804 95 803 140L800 380 790 570Q740 580 692 568L700 300 704 150z" fill="url(#shade)"/>
        <path d="M538 218L622 223Q627 226 626 260L620 480 608 648Q550 660 502 640L515 460 526 300z" fill="url(#teeth)"/><path d="M538 218L622 223Q627 226 626 260L620 480 608 648Q550 660 502 640L515 460 526 300z" fill="url(#shade)"/>
      </g>
      <g fill="#37332f" stroke="#111" stroke-width="2"><ellipse cx="318" cy="175" rx="14" ry="7"/><ellipse cx="488" cy="188" rx="14" ry="7"/><ellipse cx="656" cy="202" rx="13" ry="7"/><ellipse cx="830" cy="212" rx="14" ry="7"/><ellipse cx="261" cy="540" rx="13" ry="8"/><ellipse cx="452" cy="653" rx="12" ry="8"/><ellipse cx="642" cy="668" rx="12" ry="8"/><ellipse cx="850" cy="587" rx="14" ry="8"/><ellipse cx="456" cy="556" rx="10" ry="8"/></g>
      <g fill="none" stroke="#c7c2b8" stroke-width="3" stroke-dasharray="12 8"><path d="M287 600L280 795M456 700L448 920M612 715L595 930M802 640L782 835"/></g>
      <text class="watermark" x="172" y="596">3dmox.c</text>
    </svg>
    <svg class="triad" viewBox="0 0 50 50" role="img" aria-label="Axes">
      <path d="M8 40V18" stroke="#1a1a9c" stroke-width="3"/><path d="M4 21l1-5 4-3 4 3 1 5z" fill="#10109a"/><path d="M9 25l5 2v8H9z" fill="#114a2a"/><path d="M10 20l4-5M12 16l1 4" stroke="#5cb0e0"/>
      <path d="M8 40l22 2" stroke="#d22" stroke-width="3"/><path d="M27 37l11 5-11 4z" fill="#d22"/>
      <text x="6" y="9" fill="#4444c0">z</text><text x="41" y="43" fill="#c44">x</text>
    </svg>
    <nav class="taskpane" aria-label="Task pane">
      <button aria-label="Resources"><svg class="i20"><use href="#home"/></svg></button>
      <button aria-label="Design library"><svg class="i20"><use href="#books"/></svg></button>
      <button aria-label="File explorer"><svg class="i20"><use href="#folder"/></svg></button>
      <button aria-label="View palette"><svg class="i20"><use href="#palette"/></svg></button>
      <button class="active" aria-label="Appearances"><svg class="i20"><use href="#ball"/></svg></button>
      <button aria-label="Custom properties"><svg class="i20"><use href="#props"/></svg></button>
      <button aria-label="Forum"><svg class="i20"><use href="#forum"/></svg></button>
      <button aria-label="Recovery"><svg class="i20"><use href="#sync"/></svg></button>
    </nav>
  </section>
</main>

<section class="views">
  <button class="capture">Capture 3D View</button>
  <button class="plain" aria-label="Collapse views"><svg class="i12"><use href="#chev"/></svg></button>
</section>
<nav class="bottomtabs" aria-label="Document tabs">
  <div class="steps">
    <button aria-label="First"><svg viewBox="0 0 12 12"><path d="M3 2v8M10 2L5 6l5 4z"/></svg></button>
    <button aria-label="Previous"><svg viewBox="0 0 12 12"><path d="M8 2L3 6l5 4z"/></svg></button>
    <button aria-label="Next"><svg viewBox="0 0 12 12"><path d="M4 2l5 4-5 4z"/></svg></button>
    <button aria-label="Last"><svg viewBox="0 0 12 12"><path d="M9 2v8M2 2l5 4-5 4z"/></svg></button>
  </div>
  <button class="tab">Model</button><button class="tab active">3D Views</button><button class="tab">Motion Study 1</button>
</nav>
<footer class="status">
  <span class="grow">SOLIDWORKS Premium 2022 SP1.0</span>
  <span class="state">Under Defined</span><span class="mode">Editing Assembly</span><button class="units">MMGS<svg class="i8 up"><use href="#caret"/></svg></button>
  <svg class="i18"><use href="#tag"/></svg>
</footer>
</body>
</html>
```
FILE: styles.css
```css
* { box-sizing: border-box; }
body {
  margin: 0;
  height: 100vh;
  display: flex;
  flex-direction: column;
  overflow: hidden;
  background: #fff;
  color: #1c1c1c;
  font: 11px/13px "Open Sans", "Noto Sans", sans-serif;
}
button {
  margin: 0;
  padding: 0;
  border: 0;
  background: none;
  color: inherit;
  font: inherit;
}
svg { flex: none; display: block; }
.defs { position: absolute; width: 0; height: 0; }
.i8 { width: 8px; height: 8px; }
.i12 { width: 12px; height: 12px; }
.i14 { width: 14px; height: 14px; }
.i16 { width: 16px; height: 16px; }
.i18 { width: 18px; height: 18px; }
.i20 { width: 20px; height: 20px; }

/* Title bar */
.titlebar {
  flex: none;
  display: flex;
  align-items: center;
  height: 35px;
  background: #f7f7f7;
  border-top: 1px solid #b5b5b5;
  border-bottom: 1px solid #bdbdbd;
}
.brand {
  display: flex;
  align-items: center;
  align-self: stretch;
  width: 143px;
  padding-left: 5px;
  border-right: 1px solid #bdbdbd;
}
.logo { width: 22px; height: 24px; }
.wordmark {
  flex: 1;
  padding-left: 3px;
  color: #cf2f2f;
  font-size: 13px;
  line-height: 16px;
  white-space: nowrap;
}
.brand-arrow { margin-right: 5px; color: #888; }
.quick { display: flex; align-items: center; padding-left: 21px; }
.quick button { display: flex; align-items: center; justify-content: center; width: 30px; height: 28px; color: #333; }
.quick .drop { width: 44px; gap: 9px; }
.quick .off { color: #aaa; }
.quick .select { border: 1px solid #777; width: 43px; justify-content: space-between; padding-right: 2px; }
.select span { display: flex; align-items: center; justify-content: center; width: 30px; height: 28px; background: #acacac; border-right: 1px solid #777; }
.doc-title { flex: 1; margin: 0; text-align: center; font-size: 11px; font-weight: 400; }
.search {
  display: flex;
  align-items: center;
  width: 201px;
  height: 22px;
  padding: 0 2px 0 5px;
  background: #fff;
  border: 1px solid #bbb;
  gap: 4px;
  color: #777;
}
.search input { flex: 1; min-width: 0; border: 0; padding: 0; background: none; font: inherit; outline: 0; }
.search input::placeholder { color: #555; opacity: 1; }
.window { display: flex; gap: 16px; padding: 0 7px 0 12px; color: #333; }

/* Ribbon */
.ribbon {
  flex: none;
  display: flex;
  height: 82px;
  padding-left: 3px;
  background: #f7f7f7;
  border-bottom: 1px solid #808080;
}
.group { display: flex; margin: 1px 0 2px; border-right: 1px solid #c4c4c4; }
.group + .group { padding-left: 1px; }
.group.last { border: 0; }
.group button {
  position: relative;
  display: grid;
  align-content: start;
  justify-items: center;
  padding: 4px 5px 0;
  text-align: center;
  white-space: nowrap;
}
.group .i20 { margin-bottom: 1px; }
.group .i8 { position: absolute; bottom: 7px; left: 50%; margin-left: -4px; }
.group button:disabled { color: #b9b9b9; }
.group .pressed { background: #b0b0b0; outline: 1px solid #777; outline-offset: -1px; }
.collapse { margin-left: auto; align-self: flex-end; padding: 0 4px 6px; }

/* Command tabs and view toolbar */
.commandrow {
  flex: none;
  position: relative;
  z-index: 1;
  display: grid;
  grid-template-columns: minmax(640px, 4fr) auto 3fr;
  align-items: start;
  height: 22px;
}
.cmdtabs { display: flex; height: 22px; }
.cmdtabs button {
  padding: 0 10px;
  background: #d3d3d3;
  border-right: 1px solid #808080;
  border-bottom: 1px solid #808080;
  white-space: nowrap;
}
.cmdtabs .active { background: #f7f7f7; border-bottom-color: #f7f7f7; font-weight: 700; padding: 0 8px; }
.hud { display: flex; margin-top: 5px; padding-left: 4px; }
.hud button { display: flex; align-items: center; width: 26px; padding-left: 3px; gap: 7px; color: #888; }
.hud .wide { width: 40px; }
.docwin { display: flex; justify-content: flex-end; gap: 6px; margin: 5px 5px 0 0; color: #888; }

/* Work area */
.work { flex: 1; min-height: 0; display: flex; }
.manager {
  position: relative;
  z-index: 1;
  flex: none;
  width: 230px;
  display: flex;
  flex-direction: column;
  background: #f0f0f0;
  border-left: 1px solid #bbb;
  border-right: 1px solid #8a8a8a;
}
.grip { height: 24px; padding-top: 6px; background: #f7f7f7; border-top: 5px solid #f1f1f1; }
.grip i, .splitter i { display: block; width: 5px; height: 5px; margin: 0 auto; border: 1px solid #aaa; border-radius: 50%; background: #ddd; }
.mtabs { display: flex; height: 26px; background: #d3d3d3; border-top: 1px solid #808080; border-bottom: 1px solid #808080; }
.mtabs button { display: flex; align-items: center; justify-content: center; width: 40px; border-right: 1px solid #808080; }
.mtabs .active { background: #f7f7f7; }
.mtabs .cut { width: 30px; justify-content: flex-end; }
.mtabs .scroll { width: 19px; margin-top: 5px; background: #fff; color: #111; }
.flip { transform: scaleX(-1); }
.filter { display: flex; align-items: center; height: 26px; margin: 0 5px 0 4px; padding-left: 2px; gap: 1px; background: #f7f7f7; border: 1px solid #c4c4c4; border-top: 0; color: #456; }
.treewrap { flex: 1; min-height: 0; display: flex; }
.tree { flex: 1; min-width: 0; margin: 0; padding: 0; list-style: none; overflow: hidden; background: #f7f7f7; }
.tree li { display: flex; align-items: center; height: 22px; padding-left: 6px; white-space: nowrap; }
.tree li svg { margin-right: 5px; }
.tree .root { padding-left: 4px; }
.tree .root svg { margin-right: 4px; }
.tree b { flex: none; width: 20px; height: 10px; }
.tree .tw::before { content: ""; display: block; width: 0; border: solid transparent; border-width: 4px 0 4px 5px; border-left-color: #666; margin-left: 3px; }
.tree .open::before { border-width: 5px 4px 0; border-left-color: transparent; border-top-color: #666; margin-top: 2px; margin-left: 1px; }
.tree .sub { padding-left: 29px; }
.tree .dim { color: #8f8f8f; }
.blue { color: #3f9ccb; }
.vbar { width: 17px; padding: 17px 0 0 7px; }
.vbar i { display: block; width: 2px; height: 64%; background: #888; }
.hbar { height: 18px; padding: 8px 0 0 17px; }
.hbar i { display: block; width: 65px; height: 2px; background: #888; }
.foot { height: 5px; background: #f7f7f7; border-top: 1px solid #bbb; }
.splitter { position: absolute; left: 228px; top: 395px; width: 10px; height: 39px; background: #f7f7f7; border: 1px solid #8a8a8a; border-left: 0; }

/* Graphics area */
.viewport { flex: 1; position: relative; min-width: 0; overflow: hidden; background: #fff; }
.model { position: absolute; left: 690px; top: 221px; width: 370px; height: 330px; }
.watermark { font: 220px "Liberation Serif", serif; fill: #fff; opacity: .88; }
.triad { position: absolute; left: 34px; bottom: 48px; width: 50px; height: 50px; font: 11px "Open Sans", sans-serif; overflow: visible; }
.taskpane { position: absolute; top: 28px; right: 0; width: 22px; border-left: 1px solid #808080; border-top: 1px solid #808080; overflow: hidden; }
.taskpane button { display: flex; align-items: center; width: 22px; height: 24px; padding-left: 1px; background: #d6d6d6; border-bottom: 1px solid #808080; }
.taskpane .active { background: #fff; }

/* Bottom area */
.views {
  flex: none;
  display: flex;
  align-items: flex-start;
  justify-content: space-between;
  height: 53px;
  padding: 7px 6px 0 8px;
  background: #f7f7f7;
  border-top: 2px solid #6f7477;
  border-left: 3px solid #8a9a94;
}
.capture { width: 103px; height: 22px; background: #fff; border: 1px solid #ccc; border-radius: 2px; }
.plain { color: #777; }
.bottomtabs { flex: none; display: flex; height: 16px; background: #f7f7f7; border-top: 1px solid #808080; border-bottom: 1px solid #808080; }
.steps { display: flex; width: 67px; padding-left: 2px; background: #aaa; border-right: 1px solid #808080; }
.steps button { width: 16px; border-right: 1px solid #8b8b8b; }
.steps svg { width: 12px; height: 12px; margin: auto; fill: #8b8b8b; stroke: #8b8b8b; }
.tab { padding: 0 9px 0 14px; background: #d3d3d3; border-right: 1px solid #808080; line-height: 13px; }
.tab.active { padding: 0 8px; background: #fff; font-weight: 700; }
.tab:last-child { padding: 0 18px 0 11px; }
.status { flex: none; display: flex; align-items: center; height: 17px; padding: 2px 0 0 2px; background: #f7f7f7; overflow: hidden; }
.status .grow { flex: 1; }
.state { margin-right: 18px; }
.mode { margin-right: 124px; }
.units { display: flex; align-items: center; gap: 17px; margin-right: 24px; }
.up { transform: scaleY(-1); }
```
